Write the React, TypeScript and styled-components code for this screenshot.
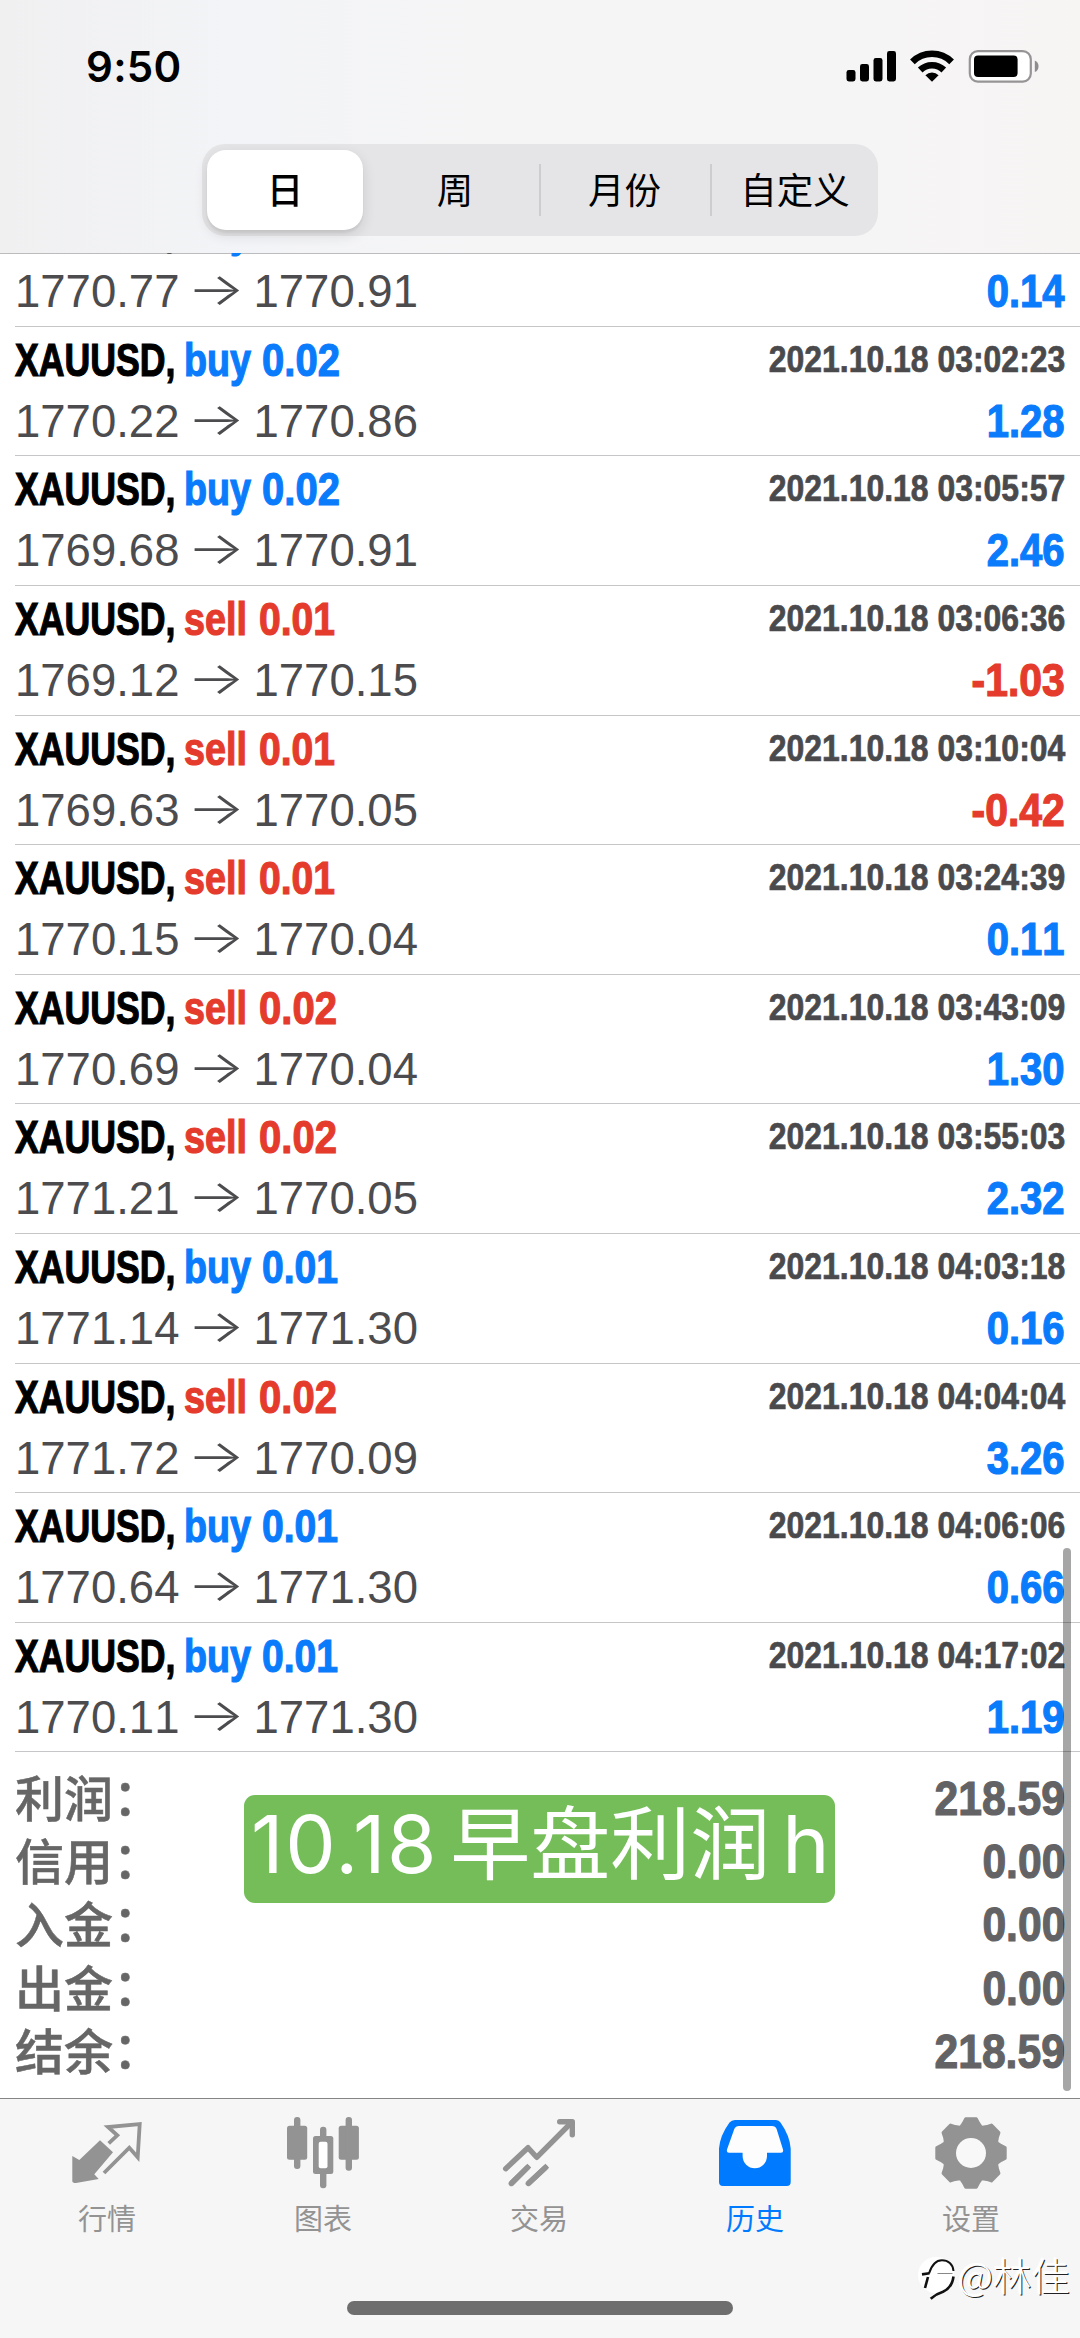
import React from "react";
import styled, { createGlobalStyle } from "styled-components";

const BLUE = "#0a7bfb";
const RED = "#e43b2c";
const LATIN = `"Liberation Sans", Arial, sans-serif`;
const CJK = `Inter, "Noto Sans CJK SC", sans-serif`;

const GlobalStyle = createGlobalStyle`
  * { box-sizing: border-box; }
  body { margin: 0; background: #fff; }
`;

const Screen = styled.main`
  position: relative;
  width: 1080px;
  height: 2338px;
  display: flex;
  flex-direction: column;
  overflow: hidden;
  background: #fff;
  font-family: ${LATIN};
`;

const Header = styled.header`
  flex: 0 0 253px;
  display: flex;
  flex-direction: column;
  align-items: center;
  background: linear-gradient(90deg, #f0f0f1 0%, #f3f4f7 22%, #f5f5f6 45%, #f6f5f5 80%, #f7f4f4 100%);
`;

const StatusBar = styled.div`
  width: 100%;
  height: 144px;
  padding: 44px 40px 0 86px;
  display: flex;
  justify-content: space-between;
  align-items: flex-start;
`;

const Clock = styled.span`
  font: 600 42px/46px Inter, sans-serif;
  letter-spacing: 0.3px;
  color: #000;
`;

const Segmented = styled.nav`
  width: 676px;
  height: 92px;
  padding: 6px 0 6px 5px;
  display: flex;
  border-radius: 23px;
  background: #e5e5e7;
`;

const Segment = styled.button<{ $w: number; $active?: boolean; $divided?: boolean }>`
  flex: 0 0 ${(p) => p.$w}px;
  margin-right: ${(p) => (p.$active ? "8px" : "0")};
  height: 80px;
  padding: 0;
  border: 0;
  border-radius: ${(p) => (p.$active ? "19px" : "0")};
  color: #000;
  font: ${(p) => (p.$active ? 500 : 400)} 36.5px/82px ${CJK};
  background: ${(p) =>
    p.$active
      ? "#fff"
      : p.$divided
        ? "linear-gradient(#cdcdd0, #cdcdd0) left center / 2px 52px no-repeat"
        : "transparent"};
  box-shadow: ${(p) => (p.$active ? "0 5px 14px rgba(0,0,0,.12), 0 3px 2px rgba(0,0,0,.05)" : "none")};
`;

const List = styled.section`
  position: relative;
  flex: 0 0 1845px;
  display: flex;
  flex-direction: column;
  justify-content: flex-end;
  overflow: hidden;
  background: linear-gradient(#bcbcbe, #bcbcbe) top / 100% 1px no-repeat #fff;
`;

const Row = styled.article`
  flex: 0 0 129.6px;
  margin-left: 15px;
  padding-right: 15px;
  border-bottom: 1px solid #c6c6c8;

  &:first-child {
    margin-top: -1px;
  }
`;

const Line = styled.div<{ $h: number }>`
  height: ${(p) => p.$h}px;
  line-height: ${(p) => p.$h}px;
  display: flex;
  justify-content: space-between;
  white-space: pre;
  font-kerning: none;
`;

const Deal = styled.div`
  display: flex;
  font-size: 46px;
  font-weight: 700;
`;

const Cell = styled.span<{ $w: number }>`
  width: ${(p) => p.$w}px;
`;

const Condensed = styled.span<{ $x: number; $color: string; $right?: boolean; $size?: number }>`
  display: inline-block;
  font-weight: 700;
  font-size: ${(p) => p.$size ?? 46}px;
  color: ${(p) => p.$color};
  -webkit-text-stroke: ${(p) => (p.$size === 36 ? 0.7 : 1.2)}px ${(p) => p.$color};
  transform: scaleX(${(p) => p.$x});
  transform-origin: ${(p) => (p.$right ? "right" : "left")} center;
`;

const Prices = styled.div`
  display: flex;
  padding-top: 1px;
  font-size: 45.5px;
  color: #4c4c4f;
`;

const Arrow = styled.span`
  width: 74px;
  margin-top: -3px;
  text-align: center;
  font-family: Inter, sans-serif;
  font-weight: 300;
  transform: scaleX(1.34);
`;

const Summary = styled.section`
  flex: 0 0 345.7px;
  padding: 14.5px 15px 0;
`;

const Label = styled.span`
  margin-top: -3px;
  font: 500 49px/63.3px "Noto Sans CJK SC", sans-serif;
  color: #666;
  -webkit-text-stroke: 0.5px #666;
`;

const Colon = styled.span`
  display: inline-block;
  transform: translateY(-2px);
`;

const ScrollThumb = styled.i`
  position: absolute;
  right: 9px;
  top: 1295px;
  width: 8px;
  height: 543px;
  border-radius: 4px;
  background: rgba(0, 0, 0, 0.35);
`;

const Caption = styled.div`
  position: absolute;
  left: 244px;
  top: 1795px;
  width: 591px;
  height: 108px;
  padding-left: 7px;
  border-radius: 11px;
  background: #74bd59;
  color: #fff;
  font: 400 80px/98px ${CJK};
  white-space: pre;
  word-spacing: -10.5px;
`;

const CaptionDate = styled.span`
  letter-spacing: 1.6px;
`;

const TabBar = styled.footer`
  flex: 0 0 240px;
  display: flex;
  flex-direction: column;
  align-items: center;
  border-top: 1px solid #858587;
  background: #f6f6f6;
`;

const Tabs = styled.nav`
  width: 100%;
  height: 202px;
  padding-top: 13px;
  display: flex;
`;

const Tab = styled.a<{ $active?: boolean }>`
  flex: 1;
  display: flex;
  flex-direction: column;
  align-items: center;
  color: ${(p) => (p.$active ? "#007aff" : "#939393")};
  font: 400 29px/42px ${CJK};
`;

const TabLabel = styled.span`
  margin: 7px 2px 0 0;
`;

const HomeIndicator = styled.div`
  width: 386px;
  height: 14px;
  border-radius: 7px;
  background: #6e6e6e;
`;

const Watermark = styled.div`
  position: absolute;
  left: 916px;
  top: 2254px;
  display: flex;
  align-items: flex-start;
  height: 50px;
  color: #fff;
  font: 300 38.5px/40px "Noto Sans CJK SC", sans-serif;
  text-shadow: 1px 1px 0 #222, -1px -1px 1px #fff;
`;

type Trade = [side?: string, volume?: string, time?: string, from?: string, to?: string, profit?: string];

const trades: Trade[] = [
  ["buy", "", "", "1770.77", "1770.91", "0.14"],
  ["buy", "0.02", "2021.10.18 03:02:23", "1770.22", "1770.86", "1.28"],
  ["buy", "0.02", "2021.10.18 03:05:57", "1769.68", "1770.91", "2.46"],
  ["sell", "0.01", "2021.10.18 03:06:36", "1769.12", "1770.15", "-1.03"],
  ["sell", "0.01", "2021.10.18 03:10:04", "1769.63", "1770.05", "-0.42"],
  ["sell", "0.01", "2021.10.18 03:24:39", "1770.15", "1770.04", "0.11"],
  ["sell", "0.02", "2021.10.18 03:43:09", "1770.69", "1770.04", "1.30"],
  ["sell", "0.02", "2021.10.18 03:55:03", "1771.21", "1770.05", "2.32"],
  ["buy", "0.01", "2021.10.18 04:03:18", "1771.14", "1771.30", "0.16"],
  ["sell", "0.02", "2021.10.18 04:04:04", "1771.72", "1770.09", "3.26"],
  ["buy", "0.01", "2021.10.18 04:06:06", "1770.64", "1771.30", "0.66"],
  ["buy", "0.01", "2021.10.18 04:17:02", "1770.11", "1771.30", "1.19"],
];

const totals = [
  ["利润", "218.59"],
  ["信用", "0.00"],
  ["入金", "0.00"],
  ["出金", "0.00"],
  ["结余", "218.59"],
];

function TradeRow({ trade }: { trade: Trade }) {
  const [side, volume, time, from, to, profit = ""] = trade;
  const tone = side === "buy" ? BLUE : RED;
  const loss = profit.startsWith("-");
  return (
    <Row>
      <Line $h={66}>
        <Deal>
          <Cell $w={169}>
            <Condensed $x={0.775} $color="#000">XAUUSD,</Condensed>
          </Cell>
          <Cell $w={side === "buy" ? 77.5 : 75}>
            <Condensed $x={0.82} $color={tone}>{side}</Condensed>
          </Cell>
          <Condensed $x={volume === "0.01" ? 0.85 : 0.87} $color={tone}>{volume}</Condensed>
        </Deal>
        <Condensed $x={0.887} $size={36} $color="#4a4a4d" $right>{time}</Condensed>
      </Line>
      <Line $h={56}>
        <Prices>
          <span>{from}</span>
          <Arrow>→</Arrow>
          <span>{to}</span>
        </Prices>
        <Condensed $x={loss ? 0.89 : 0.87} $color={loss ? RED : BLUE} $right>{profit}</Condensed>
      </Line>
    </Row>
  );
}

function StatusIcons() {
  return (
    <svg width="196" height="40" viewBox="844 44 196 40">
      <rect x="846.5" y="70" width="9" height="11.5" rx="2.4" />
      <rect x="860" y="64" width="9" height="17.5" rx="2.4" />
      <rect x="873.5" y="58" width="9" height="23.5" rx="2.4" />
      <rect x="887" y="51" width="9" height="30.5" rx="2.4" />
      <g fill="none" stroke="#000" strokeWidth="6.6">
        <path d="M912.4 61.8a27.8 27.8 0 0 1 39.200 0" />
        <path d="M920.2 70a17 17 0 0 1 23.600 0" />
      </g>
      <path d="M932 81.8l-6.600-6.600a9.400 9.400 0 0 1 13.200 0z" />
      <rect x="969.8" y="51.2" width="61" height="30.4" rx="8" fill="#fff" stroke="#969494" strokeWidth="2.2" />
      <rect x="974" y="55.6" width="43.6" height="21.4" rx="4" />
      <path d="M1034.8 60.4c5 1.6 5 10 0 11.6z" fill="#8e8c8c" />
    </svg>
  );
}

const gearPoints = Array.from({ length: 8 }, (_, i) =>
  [[-20.5, 28], [-14, 30.6], [-8.7, 34.4], [8.7, 34.4], [14, 30.6], [20.5, 28]].map(([a, r]) => {
    const t = ((i * 45 + a) * Math.PI) / 180;
    return `${(39 + r * Math.sin(t)).toFixed(2)},${(41 - r * Math.cos(t)).toFixed(2)}`;
  }).join(" "),
).join(" ");

const icons: Record<string, React.ReactNode> = {
  quotes: (
    <>
      <path d="M4.3 44l7 4L32 28.3l13 12-18.7 22 4.4 4.7L8 71q-3.7 0-3.7-2z" fill="currentColor" />
      <path d="M40.7 31.3l8.6-8L40 15l31.7-3-2 33.3-8.4-9.6L36 61" fill="none" stroke="currentColor" strokeWidth="3.8" />
    </>
  ),
  chart: (
    <g fill="currentColor">
      <rect x="3" y="13.7" width="20.2" height="34" rx="2.5" />
      <rect x="10" y="5" width="6.4" height="52" rx="3" />
      <rect x="54.7" y="13.7" width="20.2" height="34" rx="2.5" />
      <rect x="61.6" y="5" width="6.4" height="53.7" rx="3" />
      <rect x="36" y="14.7" width="6.4" height="61.6" rx="3" />
      <rect x="29" y="24" width="20.3" height="38" rx="2.5" />
      <rect x="34.7" y="29.7" width="8.8" height="26.6" rx="2" fill="#fff" />
    </g>
  ),
  trade: (
    <g fill="none" stroke="currentColor" strokeWidth="5.4" strokeLinecap="round" strokeLinejoin="round">
      <path d="M5.7 56.7l22.3-21 8.7 9.6L71 11" />
      <path d="M59.7 9.8h12.6v13" />
      <path d="M11.3 71.5l16-15.8M28.3 71.5l17-15.8" />
      <path d="M11.3 71.5l18-17.8M28.3 71.5l19-17.8" strokeLinecap="butt" />
    </g>
  ),
  inbox: (
    <>
      <path d="M19 8h41q3 0 4.500 2.500 9.200 13 10.200 26V70q0 4-4 4H7q-4 0-4-4V36.500q1-13 10.500-26Q15.500 8 19 8z" fill="currentColor" />
      <path d="M23 14h33q3.500 0 4.600 3L67 37.500q.8 3.200-2 3.200H51V44a12.200 12.200 0 0 1-24.400 0v-3.300H13q-2.800 0-2-3.200L18.300 17q1.200-3 4.700-3z" fill="#fdfdfd" />
    </>
  ),
  gear: (
    <>
      <polygon points={gearPoints} fill="currentColor" stroke="currentColor" strokeWidth="3.4" strokeLinejoin="round" />
      <circle cx="39" cy="41" r="15" fill="#f8f8f8" />
    </>
  ),
};

const tabs = [
  ["quotes", "行情"],
  ["chart", "图表"],
  ["trade", "交易"],
  ["inbox", "历史"],
  ["gear", "设置"],
];

export default function App() {
  return (
    <Screen>
      <GlobalStyle />
      <Header>
        <StatusBar>
          <Clock>9:50</Clock>
          <StatusIcons />
        </StatusBar>
        <Segmented>
          <Segment $w={156} $active>日</Segment>
          <Segment $w={168}>周</Segment>
          <Segment $w={171} $divided>月份</Segment>
          <Segment $w={170} $divided>自定义</Segment>
        </Segmented>
      </Header>
      <List>
        {trades.map((trade, i) => (
          <TradeRow key={i} trade={trade} />
        ))}
        <Summary>
          {totals.map(([label, value]) => (
            <Line key={label} $h={63.3}>
              <Label>{label}<Colon>：</Colon></Label>
              <Condensed $x={0.87} $size={49} $color="#636365" $right>{value}</Condensed>
            </Line>
          ))}
        </Summary>
        <ScrollThumb />
      </List>
      <TabBar>
        <Tabs>
          {tabs.map(([icon, label]) => (
            <Tab key={icon} $active={icon === "inbox"}>
              <svg width="80" height="80" viewBox="0 0 80 80">{icons[icon]}</svg>
              <TabLabel>{label}</TabLabel>
            </Tab>
          ))}
        </Tabs>
        <HomeIndicator />
      </TabBar>
      <Caption><CaptionDate>10.18</CaptionDate> 早盘利润 h</Caption>
      <Watermark>
        <svg width="42" height="48" viewBox="0 -2 42 48" fill="none" stroke="#111">
          <circle cx="20" cy="19" r="18" fill="#fff" stroke="none" />
          <path d="M13 17.500C16 8 20 4.300 26 4.300S37 8 37.500 15" strokeWidth="2" />
          <path d="M37.500 20.500c-1 8-5.500 13-10.500 15.200-4.500 1.400-8 3-12.300 7" strokeWidth="2.600" />
          <path d="M6 18.400l7.500-1.200" strokeWidth="2.600" />
          <path d="M12 21l-3 11" strokeWidth="2.600" />
          <path d="M21.500 17.500h15" stroke="#888" />
        </svg>
        @林佳
      </Watermark>
    </Screen>
  );
}
